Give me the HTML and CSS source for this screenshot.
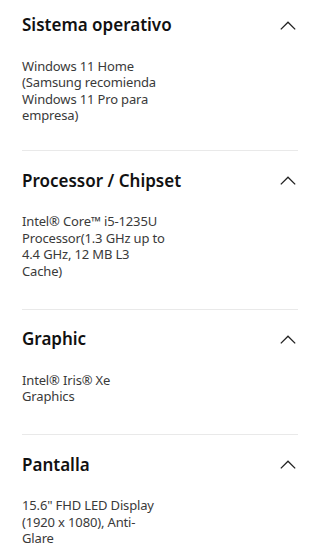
FILE: index.html
```html
<!DOCTYPE html>
<html lang="es">
<head>
<meta charset="utf-8">
<meta name="viewport" content="width=device-width, initial-scale=1">
<link rel="stylesheet" href="styles.css">
</head>
<body>
<main class="specs">
  <section class="spec spec-first">
    <div class="spec-head">
      <h2 class="spec-title">Sistema operativo</h2>
      <svg class="chev" width="16" height="9" viewBox="0 0 16 9"><path d="M0.8 8.4 L8 1.2 L15.2 8.4" fill="none" stroke="#222" stroke-width="1.3"/></svg>
    </div>
    <p class="spec-value">Windows 11 Home<br>(Samsung recomienda<br>Windows 11 Pro para<br>empresa)</p>
  </section>
  <section class="spec">
    <div class="spec-head">
      <h2 class="spec-title">Processor / Chipset</h2>
      <svg class="chev" width="16" height="9" viewBox="0 0 16 9"><path d="M0.8 8.4 L8 1.2 L15.2 8.4" fill="none" stroke="#222" stroke-width="1.3"/></svg>
    </div>
    <p class="spec-value">Intel® Core™ i5-1235U<br>Processor(1.3 GHz up to<br>4.4 GHz, 12 MB L3<br>Cache)</p>
  </section>
  <section class="spec">
    <div class="spec-head">
      <h2 class="spec-title">Graphic</h2>
      <svg class="chev" width="16" height="9" viewBox="0 0 16 9"><path d="M0.8 8.4 L8 1.2 L15.2 8.4" fill="none" stroke="#222" stroke-width="1.3"/></svg>
    </div>
    <p class="spec-value">Intel® Iris® Xe<br>Graphics</p>
  </section>
  <section class="spec">
    <div class="spec-head">
      <h2 class="spec-title">Pantalla</h2>
      <svg class="chev" width="16" height="9" viewBox="0 0 16 9"><path d="M0.8 8.4 L8 1.2 L15.2 8.4" fill="none" stroke="#222" stroke-width="1.3"/></svg>
    </div>
    <p class="spec-value">15.6" FHD LED Display<br>(1920 x 1080), Anti-<br>Glare</p>
  </section>
</main>
</body>
</html>
```
FILE: styles.css
```css
html, body {
  margin: 0;
  padding: 0;
  background: #fff;
}
body {
  font-family: "Noto Sans", "Open Sans", sans-serif;
  color: #000;
}
.specs {
  display: flex;
  flex-direction: column;
  padding: 0 22px;
}
.spec {
  padding: 17.5px 0 29.5px;
  border-bottom: 1px solid #e9e9e9;
}
.spec-first {
  padding-top: 13px;
  padding-bottom: 26.5px;
}
.spec-head {
  display: flex;
  align-items: center;
  justify-content: space-between;
  height: 24px;
}
.spec-title {
  margin: 0;
  font-size: 17px;
  line-height: 24px;
  font-weight: 600;
  color: #111;
}
.chev {
  display: block;
  margin-right: 2px;
}
.spec-value {
  margin: 20.5px 0 0;
  font-size: 13px;
  line-height: 16.5px;
  letter-spacing: -0.15px;
  color: #3a3a3a;
}
```
